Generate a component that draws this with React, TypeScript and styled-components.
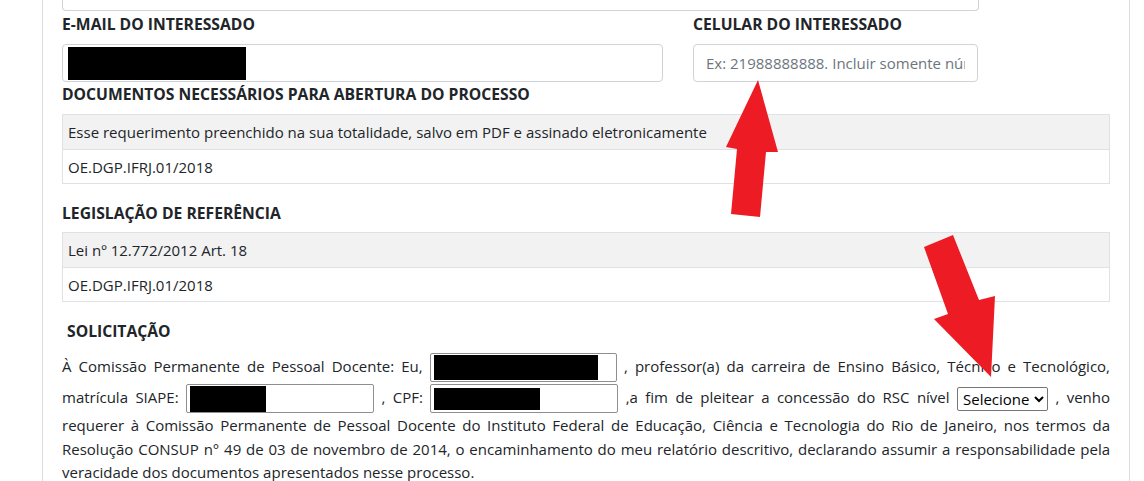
import React from 'react';
import styled, { createGlobalStyle } from 'styled-components';

const GlobalStyle = createGlobalStyle`
  html, body {
    margin: 0;
    padding: 0;
    background: #fff;
  }
  body {
    font-family: 'Open Sans', 'Noto Sans', sans-serif;
    font-size: 15px;
    color: #212529;
  }
`;

const Page = styled.div`
  position: relative;
  width: 1144px;
  height: 481px;
  overflow: hidden;
`;

const Panel = styled.div`
  margin-left: 42px;
  width: 1088px;
  height: 100%;
  border-left: 1px solid #dcdcdc;
  border-right: 1px solid #dcdcdc;
  padding-left: 19px;
  box-sizing: border-box;
`;

const TopInput = styled.div`
  width: 917px;
  height: 11px;
  box-sizing: border-box;
  border: 1px solid #ced4da;
  border-top: none;
  border-radius: 0 0 4px 4px;
`;

const FieldRow = styled.div`
  display: flex;
  gap: 30px;
`;

const Field = styled.div<{ $w: number }>`
  width: ${(p) => p.$w}px;
`;

const Label = styled.div<{ $indent?: number }>`
  font-weight: 700;
  font-size: 15.7px;
  line-height: 20px;
  text-transform: uppercase;
  padding-left: ${(p) => p.$indent ?? 0}px;
`;

const FieldLabel = styled(Label)`
  margin: 3px 0 10px;
`;

const SectionLabel = styled(Label)<{ $top: number; $bottom: number }>`
  margin-top: ${(p) => p.$top}px;
  margin-bottom: ${(p) => p.$bottom}px;
`;

const FormBox = styled.div`
  height: 38px;
  box-sizing: border-box;
  border: 1px solid #ced4da;
  border-radius: 4px;
  display: flex;
  align-items: center;
  padding: 0 5px;
`;

const FormInput = styled.input`
  width: 100%;
  height: 38px;
  box-sizing: border-box;
  border: 1px solid #ced4da;
  border-radius: 4px;
  padding: 0 12px;
  font-family: inherit;
  font-size: 15px;
  color: #495057;
  outline: none;
  &::placeholder {
    color: #6c757d;
  }
`;

const Redaction = styled.span<{ $w: number; $h: number }>`
  display: inline-block;
  width: ${(p) => p.$w}px;
  height: ${(p) => p.$h}px;
  background: #000;
  vertical-align: middle;
`;

const Table = styled.table`
  width: 1048px;
  border-collapse: collapse;
`;

const Cell = styled.td<{ $shaded?: boolean }>`
  height: ${(p) => (p.$shaded ? 34 : 33)}px;
  padding: 0 5px;
  border: 1px solid #dee2e6;
  background: ${(p) => (p.$shaded ? '#f2f2f2' : '#fff')};
  font-size: 15px;
`;

const Paragraph = styled.p`
  width: 1048px;
  margin: 11px 0 0;
  text-align: justify;
  line-height: 23.5px;
  font-size: 15px;
`;

const InlineBox = styled.span<{ $w: number }>`
  display: inline-flex;
  align-items: center;
  width: ${(p) => p.$w}px;
  height: 29px;
  box-sizing: border-box;
  border: 1px solid #8f8f8f;
  border-radius: 2px;
  padding: 0 3px;
  vertical-align: middle;
  margin: 1px 0;
`;

const Select = styled.select`
  height: 24px;
  font-family: inherit;
  font-size: 15px;
  color: #000;
  border: 1px solid #767676;
  border-radius: 2px;
  background: #fff;
  vertical-align: middle;
  padding: 0 1px;
`;

const Overlay = styled.svg`
  position: absolute;
  left: 0;
  top: 0;
  pointer-events: none;
`;

function Arrows() {
  return (
    <Overlay width={1144} height={481} viewBox="0 0 1144 481">
      <polygon
        fill="#ed1c24"
        points="758,80 778,152 766,152 760,217 731,214 737,149 726,147"
      />
      <polygon
        fill="#ed1c24"
        points="924,247 953,235 979,300 995,296 991,377 934,319 948,314"
      />
    </Overlay>
  );
}

export default function App() {
  return (
    <Page>
      <GlobalStyle />
      <Panel>
        <TopInput />
        <FieldRow>
          <Field $w={601}>
            <FieldLabel>E-mail do interessado</FieldLabel>
            <FormBox>
              <Redaction $w={178} $h={33} />
            </FormBox>
          </Field>
          <Field $w={285}>
            <FieldLabel>Celular do interessado</FieldLabel>
            <FormInput placeholder="Ex: 21988888888. Incluir somente números" />
          </Field>
        </FieldRow>

        <SectionLabel $top={2} $bottom={10}>
          Documentos necessários para abertura do processo
        </SectionLabel>
        <Table>
          <tbody>
            <tr>
              <Cell $shaded>
                Esse requerimento preenchido na sua totalidade, salvo em PDF e assinado eletronicamente
              </Cell>
            </tr>
            <tr>
              <Cell>OE.DGP.IFRJ.01/2018</Cell>
            </tr>
          </tbody>
        </Table>

        <SectionLabel $top={19} $bottom={9}>
          Legislação de referência
        </SectionLabel>
        <Table>
          <tbody>
            <tr>
              <Cell $shaded>Lei nº 12.772/2012 Art. 18</Cell>
            </tr>
            <tr>
              <Cell>OE.DGP.IFRJ.01/2018</Cell>
            </tr>
          </tbody>
        </Table>

        <SectionLabel $top={19} $bottom={0} $indent={5}>
          Solicitação
        </SectionLabel>
        <Paragraph>
          À Comissão Permanente de Pessoal Docente: Eu,{' '}
          <InlineBox $w={187}>
            <Redaction $w={164} $h={25} />
          </InlineBox>{' '}
          , professor(a) da carreira de Ensino Básico, Técnico e Tecnológico, matrícula SIAPE:{' '}
          <InlineBox $w={188}>
            <Redaction $w={76} $h={26} />
          </InlineBox>{' '}
          , CPF:{' '}
          <InlineBox $w={188}>
            <Redaction $w={106} $h={22} />
          </InlineBox>{' '}
          ,a fim de pleitear a concessão do RSC nível{' '}
          <Select defaultValue="">
            <option value="">Selecione</option>
            <option value="1">I</option>
            <option value="2">II</option>
            <option value="3">III</option>
          </Select>{' '}
          , venho requerer à Comissão Permanente de Pessoal Docente do Instituto Federal de Educação,
          Ciência e Tecnologia do Rio de Janeiro, nos termos da Resolução CONSUP n° 49 de 03 de
          novembro de 2014, o encaminhamento do meu relatório descritivo, declarando assumir a
          responsabilidade pela veracidade dos documentos apresentados nesse processo.
        </Paragraph>
      </Panel>
      <Arrows />
    </Page>
  );
}
